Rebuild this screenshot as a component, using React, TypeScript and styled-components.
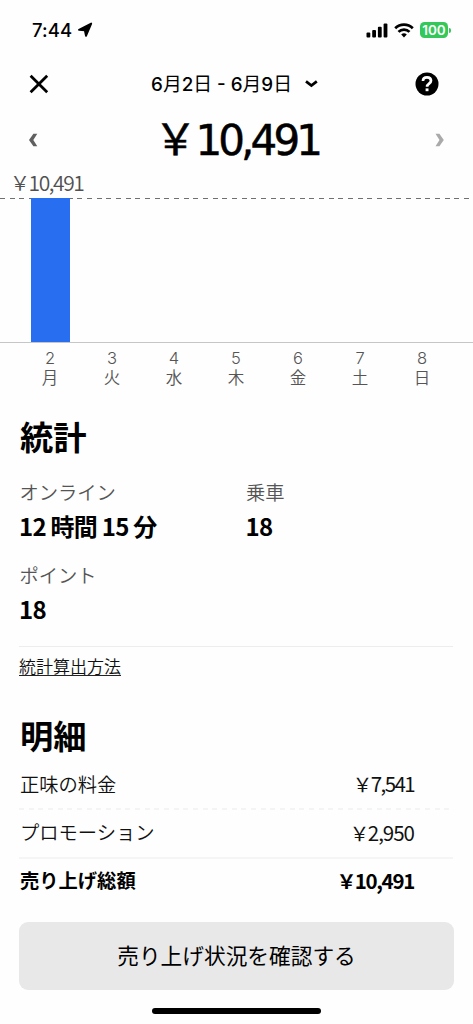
import React from "react";
import styled, { createGlobalStyle } from "styled-components";

const GlobalStyle = createGlobalStyle`
  * { box-sizing: border-box; }
  body {
    margin: 0;
    background: #fefefe;
    color: #000;
    font-family: Inter, "Noto Sans CJK JP", sans-serif;
  }
  button { font: inherit; color: inherit; border: 0; padding: 0; background: none; }
  svg { display: block; }
`;

const Screen = styled.main`
  width: 473px;
  height: 1024px;
  display: flex;
  flex-direction: column;
  overflow: hidden;
`;

const StatusBar = styled.div`
  height: 60px;
  padding: 0 22px 0 32px;
  display: flex;
  align-items: center;
  justify-content: space-between;
`;

const Cluster = styled.div<{ $gap: number }>`
  display: flex;
  align-items: center;
  gap: ${(p) => p.$gap}px;
`;

const Clock = styled.span`
  font-size: 18.5px;
  font-weight: 550;
  line-height: 22px;
  letter-spacing: 0.1px;
`;

const Battery = styled.span`
  width: 28px;
  height: 16px;
  border-radius: 4.5px;
  background: #34c759;
  color: #fff;
  font-size: 13.5px;
  font-weight: 600;
  line-height: 16px;
  text-align: center;
`;

const BatteryTip = styled.span`
  width: 2px;
  height: 5px;
  border-radius: 0 2px 2px 0;
  background: #34c759;
`;

const Header = styled.header`
  height: 48px;
  padding: 0 34px 0 29px;
  display: flex;
  align-items: center;
  justify-content: space-between;
`;

const DateRange = styled.button`
  display: flex;
  align-items: center;
  gap: 13px;
  margin-left: 5px;
  font-size: 18.8px;
  font-weight: 500;
  line-height: 24px;
  white-space: nowrap;
`;

const DateText = styled.span`
  padding-top: 2px;
`;

const DateUnit = styled.span`
  font-weight: 400;
`;

const TotalRow = styled.div`
  height: 64px;
  padding: 0 28px 0 28px;
  display: flex;
  align-items: center;
  justify-content: space-between;
`;

const Money = styled.span<{ $size: number; $weight?: number; $color?: string; $tracking?: number; $large?: boolean }>`
  display: inline-flex;
  align-items: baseline;
  padding-bottom: ${(p) => (p.$large ? 4 : 0)}px;
  font-family: ${(p) => (p.$large ? '"DejaVu Sans", ' : "")}"Noto Sans CJK JP", sans-serif;
  font-size: ${(p) => p.$size}px;
  font-weight: ${(p) => p.$weight ?? 400};
  -webkit-text-stroke: ${(p) => (p.$large ? "0.5px #000" : "0")};
  line-height: 1;
  letter-spacing: ${(p) => p.$tracking ?? 0}px;
  color: ${(p) => p.$color ?? "#000"};
  white-space: nowrap;
`;

const Yen = styled.span<{ $size: number }>`
  margin-right: -1.5px;
  font-family: "Noto Sans CJK JP", sans-serif;
  font-size: ${(p) => p.$size}px;
  letter-spacing: 0;
`;

const Chart = styled.section`
  height: 218px;
  display: flex;
  flex-direction: column;
`;

const ChartPeak = styled.div`
  height: 26px;
  padding: 0 0 5px 10px;
  display: flex;
  align-items: center;
`;

const PeakLine = styled.div`
  height: 1px;
  flex: none;
  background: repeating-linear-gradient(90deg, #707070 0 5px, transparent 5px 9.67px);
`;

const Plot = styled.div`
  height: 145px;
  margin-top: -1px;
  padding-left: 19px;
  display: flex;
  align-items: flex-end;
  border-bottom: 1px solid #c6c6c6;
`;

const Slot = styled.div`
  width: 62px;
  height: 100%;
  display: flex;
  align-items: flex-end;
  padding-left: 12px;
`;

const Bar = styled.div`
  width: 39px;
  background: #286ef0;
`;

const Axis = styled.div`
  padding: 5px 0 0 19px;
  display: flex;
`;

const Day = styled.div`
  width: 62px;
  display: flex;
  flex-direction: column;
  align-items: center;
  font-size: 16.5px;
  font-weight: 350;
  line-height: 20px;
  color: #555;
`;

const Stats = styled.section`
  height: 257px;
  margin: 0 20px 0 19px;
  padding-top: 23px;
  border-bottom: 1px solid #ededed;
`;

const Title = styled.h2`
  margin: 0;
  padding-left: 1px;
  font-size: 33.3px;
  font-weight: 700;
  line-height: 46px;
  font-family: "Noto Sans CJK JP", sans-serif;
`;

const StatGrid = styled.div`
  display: grid;
  grid-template-columns: 226.5px 1fr;
  row-gap: 16px;
  padding-top: 18px;
`;

const StatLabel = styled.div`
  padding-left: 0.5px;
  font-size: 19.3px;
  font-weight: 350;
  line-height: 32px;
  color: #555;
`;

const StatValue = styled.div`
  font-family: "Noto Sans CJK JP", sans-serif;
  font-size: 24px;
  font-weight: 700;
  line-height: 35px;
  letter-spacing: -0.75px;
  margin-top: -1px;
  padding-bottom: 1px;
`;

const LinkRow = styled.div`
  height: 64px;
  padding: 9px 0 0 19px;
`;

const MethodLink = styled.span`
  display: inline-block;
  font-family: "Noto Sans CJK JP", sans-serif;
  font-size: 17px;
  font-weight: 350;
  line-height: 20px;
  height: 20px;
  border-bottom: 1px solid #222;
  color: #111;
`;

const Details = styled.section`
  margin: 0 20px 0 19px;
  padding-top: 1px;
`;

const DetailRow = styled.div<{ $height: number; $top?: number; $bottom?: number; $bold?: boolean }>`
  height: ${(p) => p.$height}px;
  padding: ${(p) => p.$top ?? 0}px 39px ${(p) => p.$bottom ?? 0}px 1px;
  display: flex;
  align-items: center;
  justify-content: space-between;
  font-family: "Noto Sans CJK JP", sans-serif;
  font-size: 19.3px;
  line-height: 30px;
  font-weight: ${(p) => (p.$bold ? 700 : 350)};
  color: ${(p) => (p.$bold ? "#000" : "#111")};
`;

const Rule = styled.div<{ $dashed?: boolean }>`
  height: 2px;
  background: ${(p) =>
    p.$dashed ? "repeating-linear-gradient(90deg, #f4f4f4 0 5px, transparent 5px 9.67px)" : "#f5f5f5"};
`;

const Confirm = styled.button`
  height: 68px;
  flex: none;
  margin: 21px 19px 0;
  border-radius: 9px;
  background: #e8e8e8;
  font-family: "Noto Sans CJK JP", sans-serif;
  font-size: 21.7px;
  line-height: 66px;
  padding-bottom: 2px;
`;

const HomeIndicator = styled.div`
  width: 169px;
  height: 6px;
  flex: none;
  margin: 18px auto 0;
  border-radius: 3px;
  background: #000;
`;

const days = [
  ["2", "月", 1],
  ["3", "火", 0],
  ["4", "水", 0],
  ["5", "木", 0],
  ["6", "金", 0],
  ["7", "土", 0],
  ["8", "日", 0],
] as const;

type AmountProps = {
  value: string;
  size: number;
  yen: number;
  weight?: number;
  color?: string;
  tracking?: number;
  large?: boolean;
};

const Amount = ({ value, size, yen, weight, color, tracking, large }: AmountProps) => (
  <Money $size={size} $weight={weight} $color={color} $tracking={tracking} $large={large}>
    <Yen $size={yen}>￥</Yen>
    {value}
  </Money>
);

export default function App() {
  return (
    <>
      <GlobalStyle />
      <Screen>
        <StatusBar>
          <Cluster $gap={5}>
            <Clock>7:44</Clock>
            <svg width="16" height="16" viewBox="0 0 16 16">
              <path
                d="M14.2 1.6 9 13.8 7.8 8.3 2 7.8Z"
                stroke="#000"
                strokeWidth="1.9"
                strokeLinejoin="round"
              />
            </svg>
          </Cluster>
          <Cluster $gap={6}>
            <svg width="22" height="15" viewBox="0 0 22 15">
              <rect x="0.5" y="9.5" width="3.8" height="5" rx="1" />
              <rect x="6.2" y="7" width="3.8" height="7.5" rx="1" />
              <rect x="11.9" y="3.8" width="3.8" height="10.7" rx="1" />
              <rect x="17.6" y="0.6" width="3.8" height="13.9" rx="1" />
            </svg>
            <svg width="20" height="15" viewBox="0 0 20 15" fill="none" stroke="#000" strokeWidth="2.7">
              <path d="M1.2 5.3a12.6 12.6 0 0 1 17.6 0" />
              <path d="M4.5 8.9a7.7 7.7 0 0 1 11 0" />
              <path d="M10 14.4 7.2 11.5a4 4 0 0 1 5.6 0Z" fill="#000" stroke="none" />
            </svg>
            <Cluster $gap={1}>
              <Battery>100</Battery>
              <BatteryTip />
            </Cluster>
          </Cluster>
        </StatusBar>

        <Header>
          <svg width="20" height="20" viewBox="0 0 20 20" stroke="#000" strokeWidth="2.8">
            <path d="m1.6 1.7 16.6 16.6M18.2 1.7 1.6 18.3" />
          </svg>
          <DateRange>
            <DateText>
              6<DateUnit>月</DateUnit>2<DateUnit>日</DateUnit> - 6<DateUnit>月</DateUnit>9<DateUnit>日</DateUnit>
            </DateText>
            <svg width="13" height="8" viewBox="0 0 13 8" fill="none" stroke="#000" strokeWidth="2.7">
              <path d="m1 1.4 5.4 4.2 5.4-4.2" />
            </svg>
          </DateRange>
          <svg width="24" height="24" viewBox="0 0 24 24" fill="none">
            <circle cx="12" cy="12" r="11.5" fill="#000" />
            <path d="M8 9.1C8 6.8 9.6 5.4 12 5.4s4 1.3 4 3.4c0 3-3.9 2.7-3.9 6" stroke="#fff" strokeWidth="2.7" />
            <path d="M10.6 16.4h2.9v2.8h-2.9z" fill="#fff" />
          </svg>
        </Header>

        <TotalRow>
          <svg width="11" height="14" viewBox="0 0 11 14" fill="#606060">
            <path d="M5.4.7h3.9L5.3 7l4 6.3H5.4L1 7Z" />
          </svg>
          <Amount value="10,491" size={42} yen={43} weight={400} tracking={-3.9} large />
          <svg width="11" height="14" viewBox="0 0 11 14" fill="#aaa">
            <path d="M5.4.7H1.5L5.5 7l-4 6.3h3.9L9.8 7Z" />
          </svg>
        </TotalRow>

        <Chart>
          <ChartPeak>
            <Amount value="10,491" size={21} yen={20} weight={330} color="#505050" tracking={-1.4} />
          </ChartPeak>
          <PeakLine />
          <Plot>
            {days.map(([date, , share]) => (
              <Slot key={date}>{share > 0 && <Bar style={{ height: `${share * 100}%` }} />}</Slot>
            ))}
          </Plot>
          <Axis>
            {days.map(([date, weekday]) => (
              <Day key={date}>
                <span>{date}</span>
                <span>{weekday}</span>
              </Day>
            ))}
          </Axis>
        </Chart>

        <Stats>
          <Title>統計</Title>
          <StatGrid>
            <div>
              <StatLabel>オンライン</StatLabel>
              <StatValue>12 時間 15 分</StatValue>
            </div>
            <div>
              <StatLabel>乗車</StatLabel>
              <StatValue>18</StatValue>
            </div>
            <div>
              <StatLabel>ポイント</StatLabel>
              <StatValue>18</StatValue>
            </div>
          </StatGrid>
        </Stats>

        <LinkRow>
          <MethodLink>統計算出方法</MethodLink>
        </LinkRow>

        <Details>
          <Title>明細</Title>
          <DetailRow $height={50} $top={1}>
            <span>正味の料金</span>
            <Amount value="7,541" size={20.5} yen={19.5} weight={370} color="#111" tracking={-1.6} />
          </DetailRow>
          <Rule $dashed />
          <DetailRow $height={47} $bottom={3}>
            <span>プロモーション</span>
            <Amount value="2,950" size={20.5} yen={19.5} weight={370} color="#111" tracking={-1} />
          </DetailRow>
          <Rule />
          <DetailRow $height={42} $bold>
            <span>売り上げ総額</span>
            <Amount value="10,491" size={20.5} yen={19.5} weight={700} tracking={-1.3} />
          </DetailRow>
        </Details>

        <Confirm>売り上げ状況を確認する</Confirm>
        <HomeIndicator />
      </Screen>
    </>
  );
}
